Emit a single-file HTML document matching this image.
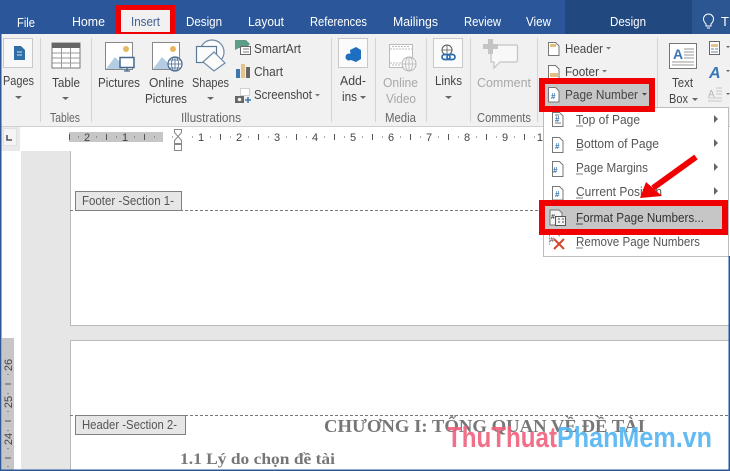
<!DOCTYPE html>
<html><head><meta charset="utf-8">
<style>
html,body{margin:0;padding:0;background:#fff;width:730px;height:471px;overflow:hidden}
svg{display:block}
text{font-family:"Liberation Sans",sans-serif;font-size:13px;fill:#444}
.w{fill:#fff}
.d{fill:#a8a8a8}
.g{fill:#666}
.r{font-size:11px;fill:#444}
.s{font-family:"Liberation Serif",serif;font-weight:bold;fill:#777}
.wm{font-family:"Liberation Sans",sans-serif;font-weight:bold;font-size:29px}
</style></head><body>
<svg width="730" height="471" viewBox="0 0 730 471" xmlns="http://www.w3.org/2000/svg">
<!-- title bar -->
<rect width="730" height="34" fill="#2b579a"/>
<rect x="565" width="127" height="34" fill="#21487f"/>
<rect x="692" width="38" height="34" fill="#2b5692"/>
<rect x="116" y="5" width="59" height="32" fill="#f00000"/>
<rect x="121" y="10" width="49" height="22" fill="#f1f1f1"/>
<g>
<text class="w" x="17" y="27" textLength="18" lengthAdjust="spacingAndGlyphs">File</text>
<text class="w" x="72" y="26" textLength="33" lengthAdjust="spacingAndGlyphs">Home</text>
<text x="131" y="26" textLength="29" lengthAdjust="spacingAndGlyphs" style="fill:#3f5f90">Insert</text>
<text class="w" x="186" y="26" textLength="36" lengthAdjust="spacingAndGlyphs">Design</text>
<text class="w" x="248" y="26" textLength="36" lengthAdjust="spacingAndGlyphs">Layout</text>
<text class="w" x="310" y="26" textLength="57" lengthAdjust="spacingAndGlyphs">References</text>
<text class="w" x="393" y="26" textLength="45" lengthAdjust="spacingAndGlyphs">Mailings</text>
<text class="w" x="464" y="26" textLength="37" lengthAdjust="spacingAndGlyphs">Review</text>
<text class="w" x="526" y="26" textLength="25" lengthAdjust="spacingAndGlyphs">View</text>
<text class="w" x="610" y="26" textLength="36" lengthAdjust="spacingAndGlyphs">Design</text>
<text class="w" x="721" y="26">T</text>
</g>
<path d="M706 24c-2-2-2.500-3-2.500-5a5 5 0 0 1 10 0c0 2-.5 3-2.500 5v2h-5z" fill="none" stroke="#fff" stroke-width="1"/>
<path d="M707 28h3" stroke="#fff"/>
<!-- ribbon -->
<rect y="34" width="730" height="92" fill="#f1f1f1"/>
<rect y="126" width="730" height="1" fill="#d0d0d0"/>
<g fill="#d4d4d4">
<rect x="40" y="38" width="1" height="84"/><rect x="91" y="38" width="1" height="84"/>
<rect x="331" y="38" width="1" height="84"/><rect x="375" y="38" width="1" height="84"/>
<rect x="426" y="38" width="1" height="84"/><rect x="470" y="38" width="1" height="84"/>
<rect x="537" y="38" width="1" height="84"/><rect x="657" y="38" width="1" height="84"/>
</g>
<!-- Pages -->
<rect x="3.500" y="38.500" width="29" height="29" fill="#f8f8f8" stroke="#c8c8c8"/>
<path d="M14 46h7l4 4v10H14z" fill="#2f6ea5"/>
<path d="M17 52h5M17 55h5" stroke="#cfe0ee"/>
<text x="3" y="85" textLength="31" lengthAdjust="spacingAndGlyphs">Pages</text>
<path d="M15 96h7l-3.500 3z" fill="#666"/>
<!-- Table -->
<rect x="52" y="43" width="28" height="25" fill="#fff" stroke="#777" stroke-width="1"/>
<rect x="52" y="43" width="28" height="5" fill="#666"/>
<path d="M52 53h28M52 58h28M52 63h28M61.500 48v20M70.500 48v20" stroke="#999" stroke-width="1"/>
<text x="52" y="87" textLength="28" lengthAdjust="spacingAndGlyphs">Table</text>
<path d="M62 97h7l-3.500 3z" fill="#666"/>
<text class="g" x="50" y="122" textLength="30" lengthAdjust="spacingAndGlyphs">Tables</text>
<!-- Pictures -->
<rect x="105.500" y="42.500" width="27" height="27" fill="#fff" stroke="#888"/>
<circle cx="126" cy="49" r="3" fill="#eab560"/>
<path d="M106 69l9-12 6 6 2 6z" fill="#b5cde3"/>
<rect x="120" y="57.500" width="14" height="10" fill="#fff" stroke="#44688e" stroke-width="1.500"/>
<path d="M124 71h6M127 68v3" stroke="#44688e" stroke-width="1.300"/>
<text x="98" y="87" textLength="42" lengthAdjust="spacingAndGlyphs">Pictures</text>
<!-- Online pictures -->
<rect x="152.500" y="42.500" width="27" height="27" fill="#fff" stroke="#888"/>
<circle cx="173" cy="49" r="3" fill="#eab560"/>
<path d="M153 69l9-12 7 7v5z" fill="#b5cde3"/>
<circle cx="175" cy="64" r="7" fill="#fff" stroke="#44688e" stroke-width="1.200"/>
<path d="M168 64h14M175 57v14M169.500 60h11M169.500 68h11" stroke="#44688e" stroke-width=".8" fill="none"/>
<ellipse cx="175" cy="64" rx="3.500" ry="7" fill="none" stroke="#44688e" stroke-width=".8"/>
<text x="149" y="87" textLength="35" lengthAdjust="spacingAndGlyphs">Online</text>
<text x="145" y="103" textLength="42" lengthAdjust="spacingAndGlyphs">Pictures</text>
<!-- Shapes -->
<circle cx="212" cy="52" r="12" fill="#fbfbfb" stroke="#6f8aa8" stroke-width="1.200"/>
<rect x="196.500" y="46.500" width="20" height="16" fill="#fbfbfb" stroke="#5b7896" stroke-width="1.200"/>
<path d="M214 52l11 11-11 8-11-9z" fill="#fbfbfb" stroke="#6f8aa8" stroke-width="1.200"/>
<text x="192" y="87" textLength="37" lengthAdjust="spacingAndGlyphs">Shapes</text>
<path d="M207 97h7l-3.500 3z" fill="#666"/>
<!-- SmartArt / Chart / Screenshot -->
<path d="M235 40h11l4 4-4 4h-7l-4 2z" fill="#5d9c85"/>
<rect x="240.500" y="46.500" width="10" height="8" fill="#fff" stroke="#666"/>
<path d="M243 49h6M243 52h6" stroke="#777"/>
<text x="254" y="53" textLength="47" lengthAdjust="spacingAndGlyphs">SmartArt</text>
<rect x="236" y="69" width="4" height="9" fill="#3d76ad"/><rect x="241" y="64" width="4" height="14" fill="#e4c48a"/><rect x="246" y="67" width="4" height="11" fill="#666"/>
<text x="254" y="76" textLength="29" lengthAdjust="spacingAndGlyphs">Chart</text>
<rect x="240.500" y="88.500" width="9" height="7" fill="#fff" stroke="#aaa" stroke-dasharray="1 1"/>
<rect x="235" y="96" width="9" height="7" fill="#666"/><circle cx="239.500" cy="99.500" r="1.800" fill="#eee"/>
<path d="M245 100h6M248 97v6" stroke="#3d76ad" stroke-width="1.500"/>
<text x="254" y="99" textLength="58" lengthAdjust="spacingAndGlyphs">Screenshot</text>
<path d="M315 94h5l-2.500 2.500z" fill="#777"/>
<text class="g" x="181" y="122" textLength="60" lengthAdjust="spacingAndGlyphs">Illustrations</text>
<!-- Add-ins -->
<rect x="338.500" y="38.500" width="29" height="29" fill="#fbfbfb" stroke="#c8c8c8"/>
<path d="M350 50l6-3 5 3v9l-5 3-5-2z" fill="#1f6fc0"/>
<circle cx="349" cy="57" r="3.500" fill="#1f6fc0"/>
<text x="340" y="85" textLength="26" lengthAdjust="spacingAndGlyphs">Add-</text>
<text x="342" y="101" textLength="15" lengthAdjust="spacingAndGlyphs">ins</text>
<path d="M360 96h6l-3 3z" fill="#666"/>
<!-- Online Video -->
<rect x="389.500" y="44.500" width="23" height="23" fill="#fff" stroke="#bbb"/>
<path d="M390 49h22M390 63h12M392 46.500h18M392 65h8" stroke="#bbb" stroke-dasharray="2 1"/>
<circle cx="409" cy="64" r="7" fill="#f6f6f6" stroke="#b5b5b5"/>
<path d="M402 64h14M409 57v14" stroke="#b5b5b5" stroke-width=".8"/>
<ellipse cx="409" cy="64" rx="3.500" ry="7" fill="none" stroke="#b5b5b5" stroke-width=".8"/>
<text class="d" x="383" y="87" textLength="35" lengthAdjust="spacingAndGlyphs">Online</text>
<text class="d" x="386" y="103" textLength="30" lengthAdjust="spacingAndGlyphs">Video</text>
<text class="g" x="385" y="122" textLength="31" lengthAdjust="spacingAndGlyphs">Media</text>
<!-- Links -->
<rect x="433.500" y="38.500" width="29" height="29" fill="#fbfbfb" stroke="#c8c8c8"/>
<circle cx="447" cy="50" r="5" fill="#fff" stroke="#555"/>
<path d="M442 50h10M447 45v10" stroke="#555" stroke-width=".8"/>
<rect x="442" y="54.500" width="8" height="5" rx="2.500" fill="none" stroke="#2a6bad" stroke-width="1.700"/>
<rect x="447" y="54.500" width="8" height="5" rx="2.500" fill="none" stroke="#2a6bad" stroke-width="1.700"/>
<text x="435" y="85" textLength="27" lengthAdjust="spacingAndGlyphs">Links</text>
<path d="M445 96h7l-3.500 3z" fill="#666"/>
<!-- Comment -->
<path d="M491 45h25a1.500 1.500 0 0 1 1.500 1.500v14a1.500 1.500 0 0 1-1.500 1.500h-16l-6 6v-6h-3v-15z" fill="#f8f8f8" stroke="#c4c4c4" stroke-width="1.200"/>
<path d="M488 39h5v5h5v5h-5v5h-5v-5h-5v-5h5z" fill="#c4c4c4"/>
<text class="d" x="477" y="87" textLength="54" lengthAdjust="spacingAndGlyphs">Comment</text>
<text class="g" x="477" y="122" textLength="54" lengthAdjust="spacingAndGlyphs">Comments</text>
<!-- Header / Footer -->
<path d="M548.500 42.500h7l3.500 3.500v9.500H548.500z" fill="#fff" stroke="#777"/>
<rect x="550" y="44" width="6" height="3" fill="#e2bf7e"/>
<text x="565" y="53" textLength="38" lengthAdjust="spacingAndGlyphs">Header</text>
<path d="M606 47h5l-2.500 2.500z" fill="#777"/>
<path d="M548.500 65.500h7l3.500 3.500v9.500H548.500z" fill="#fff" stroke="#777"/>
<rect x="550" y="73" width="8" height="4" fill="#e2bf7e"/>
<text x="565" y="76" textLength="34" lengthAdjust="spacingAndGlyphs">Footer</text>
<path d="M602 70h5l-2.500 2.500z" fill="#777"/>
<!-- Text box -->
<rect x="669.500" y="43.500" width="27" height="25" fill="#fff" stroke="#777"/>
<text x="673" y="59" style="font-size:14px;font-weight:bold;fill:#3a75b5">A</text>
<path d="M684 49h10M684 52h10M684 55h10M684 58h10M672 62h22M672 65h22" stroke="#9a9a9a"/>
<text x="672" y="87" textLength="21" lengthAdjust="spacingAndGlyphs">Text</text>
<text x="669" y="103" textLength="19" lengthAdjust="spacingAndGlyphs">Box</text>
<path d="M692 98h6l-3 3z" fill="#666"/>
<rect x="709.500" y="41.500" width="10" height="13" fill="#fff" stroke="#666"/>
<rect x="711" y="44" width="7" height="3" fill="#e4c48a"/>
<path d="M711 49h3M715 49h3M711 52h7" stroke="#6689a8"/>
<text x="709" y="78" style="font-size:16px;font-weight:bold;font-style:italic;fill:#3a75b5">A</text>
<text x="708" y="97" style="font-size:10px;fill:#b5b5b5">A</text>
<path d="M716 88h6M716 91h6M716 94h6M708 98h14M708 101h14" stroke="#c8c8c8"/>
<path d="M726 46h4l-2 2zM726 70h4l-2 2zM726 93h4l-2 2z" fill="#666"/>
<!-- ruler row -->
<rect y="127" width="730" height="24" fill="#fff"/>
<rect x="1" y="127" width="19" height="24" fill="#e9e9e9"/>
<rect x="3.500" y="128.500" width="13" height="17" fill="#f4f4f4" stroke="#e0e0e0"/>
<path d="M7 135v5h5" fill="none" stroke="#555" stroke-width="1.600"/>
<rect x="69" y="132" width="94" height="10" fill="#c6c6c6"/>
<rect x="164" y="132" width="566" height="10" fill="#fff"/>
<g>
<text class="r" x="87" y="141" text-anchor="middle">2</text>
<text class="r" x="125" y="141" text-anchor="middle">1</text>
<text class="r" x="201" y="141" text-anchor="middle">1</text>
<text class="r" x="239" y="141" text-anchor="middle">2</text>
<text class="r" x="277" y="141" text-anchor="middle">3</text>
<text class="r" x="315" y="141" text-anchor="middle">4</text>
<text class="r" x="353" y="141" text-anchor="middle">5</text>
<text class="r" x="391" y="141" text-anchor="middle">6</text>
<text class="r" x="429" y="141" text-anchor="middle">7</text>
<text class="r" x="467" y="141" text-anchor="middle">8</text>
<text class="r" x="505" y="141" text-anchor="middle">9</text>
<text class="r" x="543" y="141" text-anchor="middle">10</text>
</g>
<path d="M69.500 134v6M106.500 134v6M144.500 134v6M220.500 134v6M258.500 134v6M296.500 134v6M334.500 134v6M372.500 134v6M410.500 134v6M448.500 134v6M486.500 134v6M524.500 134v6" stroke="#555"/>
<path d="M78 137h1M96 137h1M116 137h1M134 137h1M154 137h1M172 137h1M192 137h1M210 137h1M230 137h1M248 137h1M268 137h1M286 137h1M306 137h1M324 137h1M344 137h1M362 137h1M382 137h1M400 137h1M420 137h1M438 137h1M458 137h1M476 137h1M496 137h1M514 137h1M534 137h1" stroke="#555"/>
<path d="M174.500 129.500h7v3l-3.500 4 3.500 4v3h-7v-3l3.500-4-3.500-4z" fill="#fff" stroke="#888"/>
<rect x="174.500" y="144.500" width="7" height="6" fill="#fff" stroke="#888"/>
<!-- document area -->
<rect y="151" width="730" height="320" fill="#fff"/>
<rect x="21" y="151" width="49" height="320" fill="#e6e6e6"/>
<rect x="70" y="325" width="660" height="15" fill="#e6e6e6"/>
<rect x="70" y="151" width="1" height="175" fill="#bbb"/>
<rect x="70" y="325" width="660" height="1" fill="#bbb"/>
<rect x="70" y="340" width="660" height="1" fill="#bbb"/>
<rect x="70" y="340" width="1" height="131" fill="#bbb"/>
<!-- vertical ruler -->
<rect x="2" y="338" width="12" height="132" fill="#c6c6c6"/>
<g transform="translate(12 365) rotate(-90)"><text class="r" text-anchor="middle">26</text></g>
<g transform="translate(12 402) rotate(-90)"><text class="r" text-anchor="middle">25</text></g>
<g transform="translate(12 439) rotate(-90)"><text class="r" text-anchor="middle">24</text></g>
<path d="M5 384h6M5 421h6M5 458h6" stroke="#555"/>
<path d="M8 374v1M8 393v1M8 411v1M8 430v1M8 448v1M8 466v1" stroke="#555"/>
<!-- footer / header tabs -->
<path d="M70 210.500H730" stroke="#777" stroke-dasharray="3 2"/>
<rect x="75.500" y="191.500" width="106" height="19" fill="#e6e6e6" stroke="#808080"/>
<text x="82" y="205" textLength="92" lengthAdjust="spacingAndGlyphs" style="fill:#555">Footer -Section 1-</text>
<path d="M70 415.500H730" stroke="#777" stroke-dasharray="3 2"/>
<rect x="75.500" y="415.500" width="110" height="19" fill="#e6e6e6" stroke="#808080"/>
<text x="82" y="429" textLength="95" lengthAdjust="spacingAndGlyphs" style="fill:#555">Header -Section 2-</text>
<!-- doc text -->
<text class="s" x="324" y="432" style="font-size:18px" textLength="321" lengthAdjust="spacingAndGlyphs">CHƯƠNG I: TỔNG QUAN VỀ ĐỀ TÀI</text>
<text class="s" x="180" y="464" style="font-size:16px" textLength="155" lengthAdjust="spacingAndGlyphs">1.1 Lý do chọn đề tài</text>
<!-- watermark -->
<text class="wm" x="447" y="447" textLength="110" lengthAdjust="spacingAndGlyphs" style="fill:#ef5f7c" fill-opacity=".9">ThuThuat</text>
<text class="wm" x="557" y="447" textLength="155" lengthAdjust="spacingAndGlyphs" style="fill:#52b4f2" fill-opacity=".9">PhanMem.vn</text>
<!-- menu -->
<rect x="543.500" y="107.500" width="185" height="149" fill="#fff" stroke="#bdbdbd"/>
<g>
<text x="576" y="124" textLength="64" lengthAdjust="spacingAndGlyphs" style="fill:#555">Top of Page</text>
<text x="576" y="148" textLength="83" lengthAdjust="spacingAndGlyphs" style="fill:#555">Bottom of Page</text>
<text x="576" y="172" textLength="72" lengthAdjust="spacingAndGlyphs" style="fill:#555">Page Margins</text>
<text x="576" y="196" textLength="86" lengthAdjust="spacingAndGlyphs" style="fill:#555">Current Position</text>
<text x="576" y="246" textLength="124" lengthAdjust="spacingAndGlyphs" style="fill:#555">Remove Page Numbers</text>
<path d="M576 126h7M576 150h7M576 174h7M576 198h7M576 248h7" stroke="#555" stroke-width=".8"/>
<path d="M714 115l4 4-4 4zM714 139l4 4-4 4zM714 163l4 4-4 4zM714 187l4 4-4 4z" fill="#666"/>
</g>
<!-- menu icons -->
<g fill="#fff" stroke="#777">
<path d="M552.500 112.500h7l3.500 3.500v10.500H552.500z"/>
<path d="M554.500 137.500h5l3.500 3.500v11.500H552.500V137.500z"/>
<path d="M552.500 161.500h7l3.500 3.500v11.500H552.500z"/>
<path d="M552.500 186.500h7l3.500 3.500v10H552.500z"/>
</g>
<path d="M555 115h4M555 123h6" stroke="#777"/>
<g>
<text x="555" y="122" style="font-size:8px;font-weight:bold;fill:#2f6ea5">#</text>
<text x="555" y="149" style="font-size:8px;font-weight:bold;fill:#2f6ea5">#</text>
<text x="553" y="173" style="font-size:8px;font-weight:bold;fill:#2f6ea5">#</text>
<text x="555" y="197" style="font-size:8px;font-weight:bold;fill:#2f6ea5">#</text>
</g>
<!-- Remove icon -->
<path d="M549.500 234.500v10M553 233.500h4l3 3" fill="none" stroke="#888" stroke-dasharray="2 1"/>
<text x="550" y="242" style="font-size:7px;font-weight:bold;fill:#666">#</text>
<path d="M554 239l10 10M564 239l-10 10" stroke="#d9452f" stroke-width="2"/>
<!-- red page number -->
<rect x="539" y="78" width="116" height="34" fill="#f00000"/>
<rect x="545" y="84" width="104" height="22" fill="#c6c6c6"/>
<path d="M548.500 87.500h7l3.500 3.500v11H548.500z" fill="#fff" stroke="#777"/>
<text x="551" y="99" style="font-size:8px;font-weight:bold;fill:#2f6ea5">#</text>
<text x="565" y="99" textLength="73" lengthAdjust="spacingAndGlyphs">Page Number</text>
<path d="M642 93h5l-2.500 2.500z" fill="#444"/>
<!-- red format -->
<rect x="539" y="200" width="189" height="35" fill="#f00000"/>
<rect x="545" y="206" width="177" height="23" fill="#c6c6c6"/>
<path d="M550 210h9l3 3v12h-12z" fill="#f4f4f4" stroke="#777"/>
<text x="551" y="219" style="font-size:7px;font-weight:bold;fill:#444">#</text>
<rect x="555.500" y="216.500" width="10" height="9" fill="#f4f4f4" stroke="#555"/>
<path d="M558 219h2M562 219h2M558 222h2M562 222h2" stroke="#555"/>
<text x="576" y="222" textLength="128" lengthAdjust="spacingAndGlyphs" style="fill:#333">Format Page Numbers...</text>
<path d="M576 224h7" stroke="#333" stroke-width=".8"/>
<!-- arrow -->
<path d="M696 157L653 188" stroke="#f00000" stroke-width="6" fill="none"/>
<path d="M640 198L646 182L662 196Z" fill="#f00000"/>
<!-- window edges -->
<rect x="0" y="34" width="1.500" height="437" fill="#2b579a"/>
<rect x="728.500" y="256" width="1.500" height="215" fill="#2b579a"/>
<rect x="0" y="469.500" width="730" height="1.500" fill="#2b579a"/>
</svg>
</body></html>
